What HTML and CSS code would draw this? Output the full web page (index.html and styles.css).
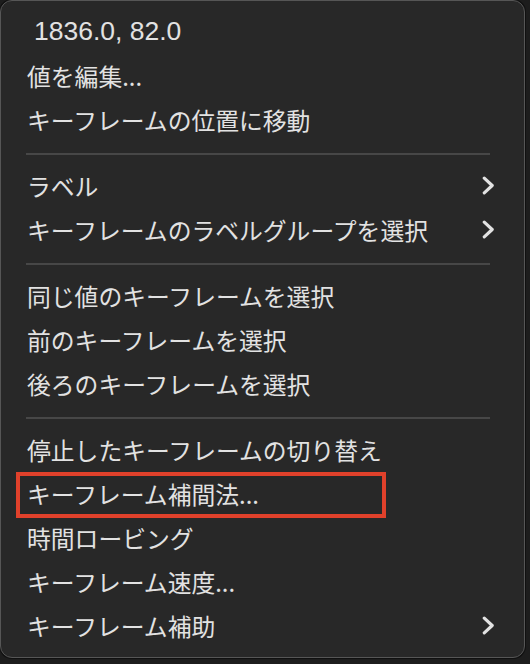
FILE: index.html
```html
<!DOCTYPE html>
<html lang="ja">
<head>
    <meta charset="UTF-8">
    <meta name="viewport" content="width=device-width, initial-scale=1.0">
    <title>キーフレーム メニュー</title>
    <link rel="stylesheet" href="styles.css">
</head>
<body>

<!-- Keyframe context menu -->
<div class="menu">
    <div class="item item-value">1836.0, 82.0</div>
    <div class="item">値を編集...</div>
    <div class="item">キーフレームの位置に移動</div>

    <div class="separator"></div>

    <div class="item">ラベル
        <svg class="chevron" viewBox="0 0 12 18"><path d="M2 2 L9.5 9 L2 16"/></svg>
    </div>
    <div class="item">キーフレームのラベルグループを選択
        <svg class="chevron" viewBox="0 0 12 18"><path d="M2 2 L9.5 9 L2 16"/></svg>
    </div>

    <div class="separator"></div>

    <div class="item">同じ値のキーフレームを選択</div>
    <div class="item">前のキーフレームを選択</div>
    <div class="item">後ろのキーフレームを選択</div>

    <div class="separator"></div>

    <div class="item">停止したキーフレームの切り替え</div>
    <div class="item marked">キーフレーム補間法...
        <span class="highlight"></span>
    </div>
    <div class="item">時間ロービング</div>
    <div class="item">キーフレーム速度...</div>
    <div class="item">キーフレーム補助
        <svg class="chevron" viewBox="0 0 12 18"><path d="M2 2 L9.5 9 L2 16"/></svg>
    </div>
</div>

</body>
</html>
```

FILE: styles.css
```css
body { margin: 0; background: #1d1d1d; font-family: "Noto Sans CJK JP", "Noto Sans", sans-serif; height: 664px; overflow: hidden; }
.menu { width: 523px; height: 646px; padding: 10px 0 0; background: #282828; border: 1px solid #565656; border-radius: 12px; box-shadow: 0 0 0 1px #101010; }
.item { position: relative; display: flex; align-items: center; justify-content: space-between; height: 40px; padding: 0 29px 4px 26px; font-size: 23.8px; color: #e2e2e2; white-space: nowrap; }
.item-value { padding-left: 33px; font-family: "Liberation Sans", "Noto Sans CJK JP", sans-serif; font-size: 26.5px; }
.chevron { width: 13px; height: 19px; fill: none; stroke: #e2e2e2; stroke-width: 3; stroke-linecap: round; stroke-linejoin: round; }
.separator { height: 2px; margin: 10px 34px 10px 25px; background: #474747; }
.highlight { position: absolute; left: 15px; top: -1px; width: 362px; height: 38px; border: 4px solid #e0412b; }
```
